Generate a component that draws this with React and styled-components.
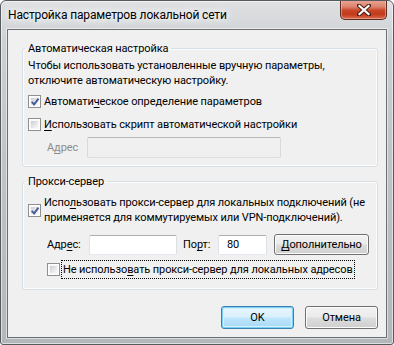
import React from 'react'
import styled, { createGlobalStyle, css } from 'styled-components'

const GlobalStyle = createGlobalStyle`
  html, body {
    margin: 0;
    padding: 0;
    background: #ffffff;
  }
  body {
    font-family: Roboto, "Liberation Sans", sans-serif;
    font-size: 11px;
    letter-spacing: -0.1px;
    color: #000;
  }
`

const Window = styled.div`
  box-sizing: border-box;
  width: 394px;
  height: 345px;
  display: flex;
  flex-direction: column;
  padding: 0 6px 6px 6px;
  border: 1px solid #555a5f;
  border-radius: 6px 6px 3px 3px;
  background: linear-gradient(180deg, #dfe1e3 0%, #cdd0d3 12%, #c1c4c7 45%, #b4b7ba 100%);
  box-shadow: inset 0 0 0 1px rgba(255, 255, 255, 0.55);
  overflow: hidden;
`

const TitleBar = styled.div`
  height: 28px;
  flex: none;
  display: flex;
  align-items: flex-start;
  justify-content: space-between;
`

const Title = styled.div`
  padding-left: 1px;
  line-height: 28px;
  font-size: 12px;
  letter-spacing: -0.15px;
  color: #000;
  white-space: nowrap;
  text-shadow: 0 0 6px #fff, 0 0 10px #fff, 0 0 14px #fff;
`

const CloseButton = styled.div`
  box-sizing: border-box;
  width: 47px;
  height: 20px;
  margin-top: -1px;
  display: flex;
  align-items: center;
  justify-content: center;
  border: 1px solid #5b2a22;
  border-top: none;
  border-radius: 0 0 5px 5px;
  background: linear-gradient(180deg, #eaa898 0%, #dc846e 35%, #c94528 55%, #c33a1c 75%, #da6a4d 100%);
  box-shadow: inset 0 0 0 1px rgba(255, 210, 200, 0.45);
`

const Client = styled.div`
  flex: 1;
  display: flex;
  flex-direction: column;
  padding: 11px 8px 0 14px;
  background: #f0f0f0;
  border: 1px solid #6c6f72;
  box-shadow: 0 0 0 1px rgba(255, 255, 255, 0.5);
`

const GroupBox = styled.fieldset`
  margin: ${({ $gap }) => $gap || 0}px 0 0 0;
  padding: 0 8px ${({ $bottom }) => $bottom}px 5px;
  min-width: 0;
  border: 1px solid #d5dfe5;
  border-radius: 3px;
  box-shadow: inset 0 0 0 1px #fbfbfb;
`

const Legend = styled.legend`
  margin-left: -3px;
  padding: 0 3px;
  line-height: 15px;
  color: #000;
`

const Hint = styled.p`
  margin: 2px 0 0 0;
  line-height: 15px;
  white-space: nowrap;
`

const CheckRow = styled.div`
  display: flex;
  align-items: center;
  min-height: 17px;
  margin-top: ${({ $gap }) => $gap}px;
  padding-left: ${({ $indent }) => $indent || 0}px;
`

const Box = styled.span`
  position: relative;
  box-sizing: border-box;
  flex: none;
  width: 13px;
  height: 13px;
  border: 1px solid #8e8f8f;
  background: #f7f7f7;
  box-shadow: inset 0 0 0 1px #fdfdfd;
  &::before {
    content: '';
    position: absolute;
    left: 2px;
    top: 2px;
    width: 7px;
    height: 7px;
    background: linear-gradient(135deg, #c9cdd2 0%, #e6e7e9 55%, #f8f8f8 100%);
  }
  svg {
    position: absolute;
    left: 0;
    top: 0;
  }
`

const CheckLabel = styled.span`
  margin-left: 2px;
  padding: 1px 1px;
  line-height: 15px;
  white-space: nowrap;
  ${({ $focused }) =>
    $focused &&
    css`
      outline: 1px dotted #000;
      outline-offset: 0;
    `}
`

const Key = styled.span`
  text-decoration: underline;
  text-underline-offset: 2px;
`

const FieldRow = styled.div`
  display: flex;
  align-items: center;
  height: 21px;
  margin-top: ${({ $gap }) => $gap}px;
  padding-left: 19px;
`

const FieldLabel = styled.span`
  flex: none;
  width: ${({ $width }) => $width}px;
  margin-left: ${({ $gap }) => $gap || 0}px;
  color: ${({ $disabled }) => ($disabled ? '#8d8d8d' : '#000')};
  line-height: 15px;
  white-space: nowrap;
`

const TextInput = styled.div`
  box-sizing: border-box;
  flex: none;
  width: ${({ $width }) => $width}px;
  height: ${({ $height }) => $height || 20}px;
  padding: 0 8px;
  line-height: 18px;
  border: 1px solid #abadb3;
  border-color: #abadb3 #dbdfe6 #e3e9ef #e2e3ea;
  border-radius: 2px;
  background: ${({ $disabled }) => ($disabled ? '#f0f0f0' : '#ffffff')};
  ${({ $disabled }) =>
    $disabled &&
    css`
      border-color: #b7b9bd #d7d9dd #dcdfe2 #d7d9dd;
    `}
`

const Button = styled.div`
  box-sizing: border-box;
  flex: none;
  width: ${({ $width }) => $width}px;
  height: ${({ $height }) => $height}px;
  margin-left: ${({ $gap }) => $gap || 0}px;
  display: flex;
  align-items: center;
  justify-content: center;
  white-space: nowrap;
  border: 1px solid #707070;
  border-radius: 3px;
  background: linear-gradient(180deg, #f2f2f2 0%, #ebebeb 48%, #dddddd 52%, #cfcfcf 100%);
  box-shadow: inset 0 0 0 1px #fcfcfc;
  ${({ $default }) =>
    $default &&
    css`
      border-color: #3c7fb1;
      background: linear-gradient(180deg, #eaf6fd 0%, #d9f0fc 48%, #bee6fd 52%, #a7d9f5 100%);
      box-shadow: inset 0 0 0 1px #7ad0f5, inset 0 0 0 2px #d4f0fc;
    `}
`

const Footer = styled.div`
  display: flex;
  justify-content: flex-end;
  margin-top: 16px;
`

const CheckMark = () => (
  <svg width="11" height="11" viewBox="0 0 11 11">
    <path
      d="M2.2 5.4 L4.6 7.9 L9 2.2"
      fill="none"
      stroke="#4a5f97"
      strokeWidth="2"
      strokeLinejoin="miter"
      transform="translate(0.5 0.5)"
    />
  </svg>
)

const Checkbox = ({ checked }) => <Box>{checked && <CheckMark />}</Box>

const CloseGlyph = () => (
  <svg width="14" height="12" viewBox="0 0 14 12">
    <path
      d="M2 1.5 L12 10.5 M12 1.5 L2 10.5"
      stroke="#4a1c14"
      strokeWidth="4"
      strokeLinecap="square"
    />
    <path
      d="M2.5 2 L11.5 10 M11.5 2 L2.5 10"
      stroke="#ffffff"
      strokeWidth="2.2"
      strokeLinecap="square"
    />
  </svg>
)

export default function App() {
  return (
    <>
      <GlobalStyle />
      <Window>
        <TitleBar>
          <Title>Настройка параметров локальной сети</Title>
          <CloseButton>
            <CloseGlyph />
          </CloseButton>
        </TitleBar>
        <Client>
          <GroupBox $bottom={8}>
            <Legend>Автоматическая настройка</Legend>
            <Hint>
              Чтобы использовать установленные вручную параметры,
              <br />
              отключите автоматическую настройку.
            </Hint>
            <CheckRow $gap={5}>
              <Checkbox checked />
              <CheckLabel>
                Автомати<Key>ч</Key>еское определение параметров
              </CheckLabel>
            </CheckRow>
            <CheckRow $gap={6}>
              <Checkbox />
              <CheckLabel>
                <Key>И</Key>спользовать скрипт автоматической настройки
              </CheckLabel>
            </CheckRow>
            <FieldRow $gap={4}>
              <FieldLabel $width={40} $disabled>
                А<Key>д</Key>рес
              </FieldLabel>
              <TextInput $width={194} $height={21} $disabled />
            </FieldRow>
          </GroupBox>

          <GroupBox $gap={7} $bottom={11}>
            <Legend>Прокси-сервер</Legend>
            <CheckRow $gap={5}>
              <Checkbox checked />
              <CheckLabel>
                Испо<Key>л</Key>ьзовать прокси-сервер для локальных подключений (не
                <br />
                применяется для коммутируемых или VPN-подключений).
              </CheckLabel>
            </CheckRow>
            <FieldRow $gap={8}>
              <FieldLabel $width={42}>
                Адр<Key>е</Key>с:
              </FieldLabel>
              <TextInput $width={88} />
              <FieldLabel $width={35} $gap={6}>
                По<Key>р</Key>т:
              </FieldLabel>
              <TextInput $width={49}>80</TextInput>
              <Button $width={95} $height={21} $gap={7}>
                <span>
                  <Key>Д</Key>ополнительно
                </span>
              </Button>
            </FieldRow>
            <CheckRow $gap={6} $indent={19}>
              <Checkbox />
              <CheckLabel $focused>
                Не использо<Key>в</Key>ать прокси-сервер для локальных адресов
              </CheckLabel>
            </CheckRow>
          </GroupBox>

          <Footer>
            <Button $width={73} $height={23} $default>
              OK
            </Button>
            <Button $width={73} $height={23} $gap={11}>
              Отмена
            </Button>
          </Footer>
        </Client>
      </Window>
    </>
  )
}
